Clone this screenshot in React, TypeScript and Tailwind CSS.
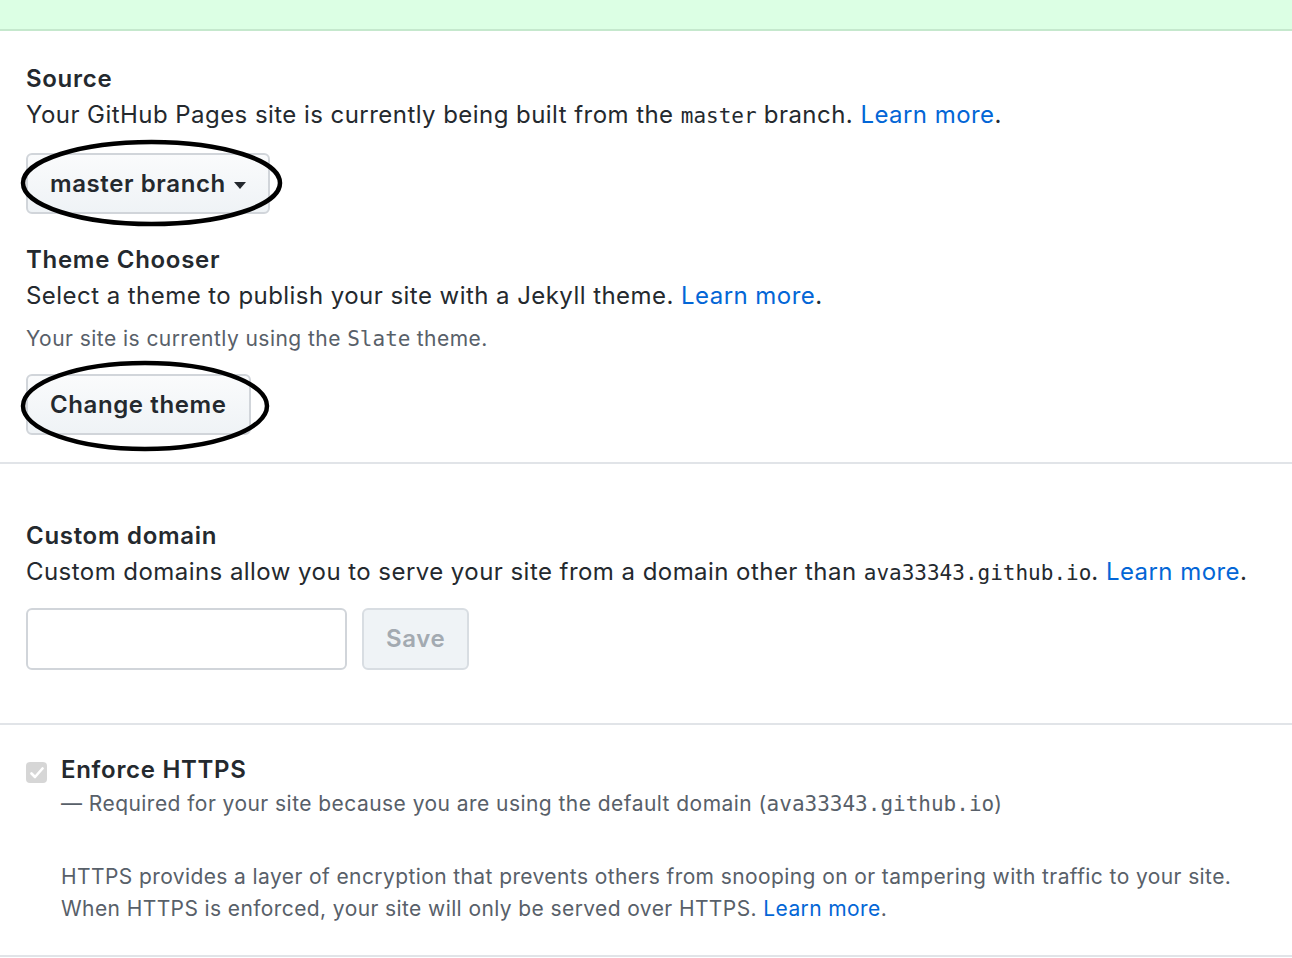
import React from 'react';

const sans = "font-['Inter','Noto_Sans',sans-serif]";
const mono = "font-['DejaVu_Sans_Mono','Liberation_Mono',monospace] tracking-normal";

// Hand-drawn ellipse that marks a button
const Ring = ({ w, h }: { w: number; h: number }) => (
  <svg
    className="absolute pointer-events-none"
    style={{ left: -6, top: -14, width: w, height: h }}
    viewBox={`0 0 ${w} ${h}`}
  >
    <ellipse cx={w / 2} cy={h / 2} rx={w / 2 - 3} ry={h / 2 - 3} fill="none" stroke="#000" strokeWidth="4.5" />
  </svg>
);

const LearnMore = () => (
  <>
    <a href="#" className="text-[#0366d6]">Learn more</a>.
  </>
);

const Btn = ({ children, disabled }: { children: React.ReactNode; disabled?: boolean }) => (
  <button
    className={
      disabled
        ? "h-[62px] px-[22px] rounded-md border-2 border-[#d8dde2] bg-[#eff3f6] text-[#a3aab1] text-[24px] font-semibold tracking-[0.6px]"
        : "h-[61px] pl-[22px] pr-[22px] rounded-md border-2 border-[#d1d5da] bg-gradient-to-b from-[#fafbfc] to-[#eff3f6] text-[#24292e] text-[24px] font-semibold tracking-[0.6px] flex items-center gap-2"
    }
  >
    {children}
  </button>
);

export default function App() {
  return (
    <div className={`${sans} bg-white text-[#24292e] w-[1292px] min-h-[958px] tracking-[0.45px]`}>
      <div className="h-[31px] bg-[#dcffe4] border-b-2 border-[#c5e8cd]" />

      <div className="px-[26px] pt-[30px] pb-[27px]">
        <h3 className="text-[24px] leading-[36px] font-semibold tracking-[0.7px]">Source</h3>
        <p className="text-[24px] leading-[36px]">
          Your GitHub Pages site is currently being built from the <code className={`${mono} text-[21px]`}>master</code> branch. <LearnMore />
        </p>
        <div className="relative inline-block mt-[19px]">
          <Btn>
            master branch
            <svg width="12" height="8" viewBox="0 0 12 8" className="mt-1">
              <path d="M0 0h12L6 7z" fill="#24292e" />
            </svg>
          </Btn>
          <Ring w={263} h={88} />
        </div>

        <h3 className="text-[24px] leading-[36px] font-semibold tracking-[0.7px] mt-[28px]">Theme Chooser</h3>
        <p className="text-[24px] leading-[36px]">
          Select a theme to publish your site with a Jekyll theme. <LearnMore />
        </p>
        <p className="text-[21px] leading-[30px] text-[#586069] mt-[10px]">
          Your site is currently using the <code className={`${mono} text-[21px]`}>Slate</code> theme.
        </p>
        <div className="relative inline-block mt-[20px]">
          <Btn>Change theme</Btn>
          <Ring w={250} h={92} />
        </div>
      </div>

      <div className="border-t-2 border-[#e1e4e8] px-[26px] pt-[54px] pb-[53px]">
        <h3 className="text-[24px] leading-[36px] font-semibold tracking-[0.7px]">Custom domain</h3>
        <p className="text-[24px] leading-[36px]">
          Custom domains allow you to serve your site from a domain other than <code className={`${mono} text-[21px]`}>ava33343.github.io</code>. <LearnMore />
        </p>
        <div className="flex gap-[15px] mt-[17px]">
          <input className="w-[321px] h-[62px] rounded-md border-2 border-[#d1d5da] bg-white outline-none px-3 text-[24px]" />
          <Btn disabled>Save</Btn>
        </div>
      </div>

      <div className="border-t-2 border-[#e1e4e8] px-[26px] pt-[27px] pb-[30px]">
        <div className="flex gap-[14px]">
          <div className="w-[21px] h-[21px] mt-[10px] rounded-[4px] bg-[#d6d6d6] flex items-center justify-center shrink-0">
            <svg width="14" height="12" viewBox="0 0 14 12">
              <path d="M1.5 6.5l3.5 3.5 7.5-8.5" fill="none" stroke="#fff" strokeWidth="2.6" strokeLinecap="round" strokeLinejoin="round" />
            </svg>
          </div>
          <div>
            <h3 className="text-[24px] leading-[36px] font-semibold tracking-[0.7px]">Enforce HTTPS</h3>
            <p className="text-[21px] leading-[32px] text-[#586069]">
              — Required for your site because you are using the default domain (<code className={`${mono} text-[21px]`}>ava33343.github.io</code>)
            </p>
            <p className="text-[21px] leading-[32px] text-[#586069] mt-[41px] tracking-[0.4px]">
              HTTPS provides a layer of encryption that prevents others from snooping on or tampering with traffic to your site.
              <br />
              When HTTPS is enforced, your site will only be served over HTTPS. <LearnMore />
            </p>
          </div>
        </div>
      </div>
      <div className="border-t-2 border-[#e1e4e8]" />
    </div>
  );
}
